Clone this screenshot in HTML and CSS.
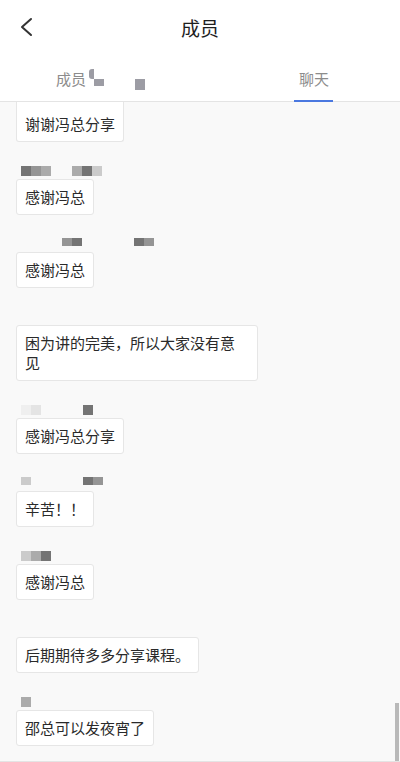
FILE: index.html
```html
<!DOCTYPE html>
<html lang="zh-CN">
<head>
    <meta charset="UTF-8">
    <meta name="viewport" content="width=device-width, initial-scale=1.0">
    <title>成员</title>
    <link rel="stylesheet" href="styles.css">
</head>
<body>
    <!-- Header -->
    <header class="header">
        <a href="#" class="back">
            <svg width="14" height="20" viewBox="0 0 14 20"><path d="M12 2 L3 10 L12 18" fill="none" stroke="#333" stroke-width="2" stroke-linecap="round" stroke-linejoin="round"/></svg>
        </a>
        <h1 class="title">成员</h1>
    </header>

    <!-- Tabs -->
    <nav class="tabs">
        <div class="tab">
            <span class="tab-label">成员</span>
            <span class="blur">
                <i class="cell c-mid tall"></i><i class="cell c-mid low"></i><i class="cell c-mid low far"></i>
            </span>
        </div>
        <div class="tab active">
            <span class="tab-label">聊天</span>
        </div>
    </nav>

    <!-- Chat list -->
    <main class="chat">
        <div class="msg first">
            <div class="bubble cut">谢谢冯总分享</div>
        </div>

        <div class="msg">
            <div class="name">
                <i class="cell c-dark"></i><i class="cell c-mid"></i><i class="cell c-light"></i>
                <i class="cell c-light gap-s"></i><i class="cell c-dark"></i><i class="cell c-pale"></i>
            </div>
            <div class="bubble">感谢冯总</div>
        </div>

        <div class="msg">
            <div class="name thin">
                <i class="cell c-mid gap-l"></i><i class="cell c-dark"></i>
                <i class="cell c-dark gap-xl"></i><i class="cell c-mid"></i>
            </div>
            <div class="bubble">感谢冯总</div>
        </div>

        <div class="msg">
            <div class="name"></div>
            <div class="bubble wide">困为讲的完美，所以大家没有意见</div>
        </div>

        <div class="msg">
            <div class="name">
                <i class="cell c-ghost"></i><i class="cell c-faint"></i>
                <i class="cell c-dark gap-m"></i>
            </div>
            <div class="bubble">感谢冯总分享</div>
        </div>

        <div class="msg">
            <div class="name thin">
                <i class="cell c-pale"></i>
                <i class="cell c-dark gap-m2"></i><i class="cell c-mid"></i>
            </div>
            <div class="bubble">辛苦！！</div>
        </div>

        <div class="msg">
            <div class="name">
                <i class="cell c-pale"></i><i class="cell c-light"></i><i class="cell c-dark"></i>
            </div>
            <div class="bubble">感谢冯总</div>
        </div>

        <div class="msg">
            <div class="name"></div>
            <div class="bubble">后期期待多多分享课程。</div>
        </div>

        <div class="msg">
            <div class="name">
                <i class="cell c-light"></i>
            </div>
            <div class="bubble">邵总可以发夜宵了</div>
        </div>

        <div class="scrollbar"></div>
    </main>

    <footer class="footer"></footer>
</body>
</html>
```

FILE: styles.css
```css
* {
    margin: 0;
    padding: 0;
    box-sizing: border-box;
}

body {
    font-family: "Noto Sans CJK SC", "Noto Sans", sans-serif;
    background: #f9f9f9;
    color: #333;
    height: 100vh;
    overflow: hidden;
}

/* Header */
.header {
    height: 55px;
    background: #fff;
    display: flex;
    align-items: center;
    justify-content: center;
    position: relative;
}

.back {
    position: absolute;
    left: 19px;
    top: 17px;
    display: flex;
}

.title {
    font-size: 19px;
    font-weight: 400;
    color: #1e1e1e;
    margin-top: -1px;
}

/* Tabs */
.tabs {
    height: 47px;
    background: #fff;
    border-bottom: 1px solid #e4e4e4;
    display: flex;
}

.tab {
    flex: 1;
    display: flex;
    align-items: center;
    justify-content: center;
    position: relative;
    font-size: 15px;
    color: #8c8c8c;
}

.tab .tab-label {
    line-height: 20px;
    margin-top: 1px;
}

.tab:first-child {
    justify-content: flex-start;
    padding-left: 56px;
}

.tab.active::after {
    content: "";
    position: absolute;
    left: 66px;
    right: 67px;
    bottom: -1px;
    height: 2px;
    background: #4a78e0;
}

.blur {
    display: flex;
    align-items: flex-start;
    height: 22px;
    margin-top: 4px;
}

.blur .cell {
    background: #9c9ca4;
}

.blur .tall {
    width: 5px;
    height: 10px;
    margin-left: 3px;
    border-radius: 3px 0 0 3px;
}

.blur .low {
    margin-top: 10px;
    height: 7px;
}

.blur .far {
    margin-left: 31px;
    height: 11px;
}

/* Chat */
.chat {
    height: 659px;
    padding: 0 16px;
    position: relative;
    overflow: hidden;
}

.msg {
    margin-top: 23px;
}

.msg.first {
    margin-top: 0;
}

.name {
    height: 14px;
    display: flex;
    align-items: flex-start;
    padding-left: 5px;
    padding-top: 1px;
}

.name.thin {
    padding-top: 0;
}

.name.thin .cell {
    height: 8px;
}

.cell {
    display: block;
    width: 10px;
    height: 10px;
}

.c-dark  { background: #747474; }
.c-mid   { background: #959595; }
.c-light { background: #ababab; }
.c-pale  { background: #cbcbcb; }
.c-faint { background: #e4e4e4; }
.c-ghost { background: #efefef; }

.gap-s  { margin-left: 21px; }
.gap-m  { margin-left: 42px; }
.gap-m2 { margin-left: 52px; }
.gap-l  { margin-left: 41px; }
.gap-xl { margin-left: 52px; }

.bubble {
    display: inline-block;
    max-width: 242px;
    background: #fff;
    border: 1px solid #e6e6e6;
    border-radius: 3px;
    padding: 7px 8px;
    font-size: 15px;
    line-height: 20px;
    color: #2a2a2a;
}

.bubble.cut {
    border-top: none;
    border-radius: 0 0 3px 3px;
    padding-top: 12px;
}

.scrollbar {
    position: absolute;
    right: 1px;
    bottom: 0;
    width: 4px;
    height: 58px;
    background: #b9b9b9;
}

.footer {
    border-top: 1px solid #e4e4e4;
    height: 10px;
    background: #fafafa;
}
```
